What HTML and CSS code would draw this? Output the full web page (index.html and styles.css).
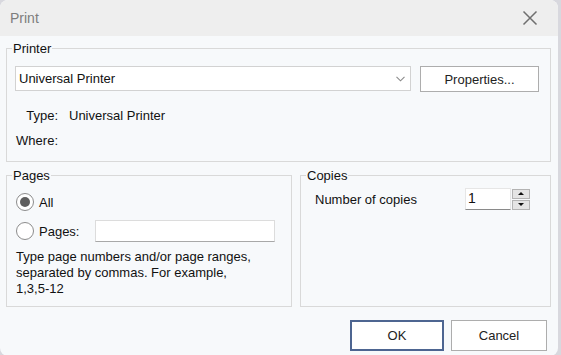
FILE: index.html
```html
<!DOCTYPE html>
<html lang="en">
<head>
    <meta charset="UTF-8">
    <meta name="viewport" content="width=device-width, initial-scale=1.0">
    <title>Print</title>
    <link rel="stylesheet" href="styles.css">
</head>
<body>

    <div class="dialog">
        <div class="titlebar">
            <span class="title">Print</span>
            <svg class="close" width="16" height="16" viewBox="0 0 16 16">
                <path d="M1.5 1.5 L14.5 14.5 M14.5 1.5 L1.5 14.5" stroke="#6f6f6f" stroke-width="1.5" fill="none"/>
            </svg>
        </div>

        <div class="content">
            <fieldset class="group">
                <legend>Printer</legend>
                <div class="group-body printer-body">
                    <div class="printer-row">
                        <div class="select">
                            <span>Universal Printer</span>
                            <svg width="9" height="6" viewBox="0 0 9 6">
                                <path d="M0.5 0.8 L4.5 4.8 L8.5 0.8" stroke="#8a8a8a" stroke-width="1.1" fill="none"/>
                            </svg>
                        </div>
                        <button class="btn btn-props">Properties...</button>
                    </div>
                    <div class="info">
                        <span class="info-label">Type:</span>
                        <span>Universal Printer</span>
                        <span class="info-label">Where:</span>
                        <span></span>
                    </div>
                </div>
            </fieldset>

            <div class="groups">
                <fieldset class="group">
                    <legend>Pages</legend>
                    <div class="group-body pages-body">
                        <div class="radio-row">
                            <span class="radio checked"></span>
                            <span>All</span>
                        </div>
                        <div class="radio-row">
                            <span class="radio"></span>
                            <span>Pages:</span>
                            <div class="text-input"></div>
                        </div>
                        <p class="hint">Type page numbers and/or page ranges, separated by commas. For example, <span class="nowrap">1,3,5-12</span></p>
                    </div>
                </fieldset>

                <fieldset class="group">
                    <legend>Copies</legend>
                    <div class="group-body copies-body">
                        <div class="copies-row">
                            <span>Number of copies</span>
                            <div class="num-input">1</div>
                            <div class="spinner">
                                <div class="spin-btn"><span class="tri-up"></span></div>
                                <div class="spin-btn"><span class="tri-down"></span></div>
                            </div>
                        </div>
                    </div>
                </fieldset>
            </div>

            <div class="actions">
                <button class="btn btn-ok">OK</button>
                <button class="btn btn-cancel">Cancel</button>
            </div>
        </div>
    </div>

</body>
</html>
```

FILE: styles.css
```css
body {
    font-family: 'Liberation Sans', Arial, sans-serif;
    font-size: 13px;
    margin: 0;
    padding: 0;
    background-color: #d8d8de;
    color: #111;
}

.dialog {
    width: 558px;
    height: 356px;
    background-color: #f7f9fb;
    border-radius: 8px;
    overflow: hidden;
}

.titlebar {
    height: 36px;
    background-color: #eeeeee;
    display: flex;
    justify-content: space-between;
    align-items: center;
    padding: 0 20px 0 10px;
}

.title {
    font-size: 14px;
    color: #7d7d7d;
}

.content {
    padding: 5px 7px 0 6px;
}

.group {
    margin: 0;
    padding: 0;
    min-width: 0;
    border: 1px solid #d9d9d9;
}

.group legend {
    margin-left: 5px;
    padding: 0 1px;
    line-height: 15px;
}

.group-body {
    line-height: 15px;
}

/* printer */
.printer-body {
    padding: 10px 11px 13px 8px;
}

.printer-row {
    display: flex;
    gap: 9px;
}

.select {
    flex: 1;
    height: 25px;
    box-sizing: border-box;
    background-color: white;
    border: 1px solid #d2d2d2;
    display: flex;
    justify-content: space-between;
    align-items: center;
    padding: 0 5px 0 3px;
}

.btn {
    font-family: inherit;
    font-size: 13px;
    color: #222;
    background-color: white;
    border: 1px solid #adadad;
    padding: 0;
    box-sizing: border-box;
}

.btn-props {
    width: 119px;
    height: 26px;
}

.info {
    display: grid;
    grid-template-columns: 43px auto;
    column-gap: 11px;
    row-gap: 10px;
    margin-top: 16px;
}

.info-label {
    text-align: right;
}

/* pages / copies */
.groups {
    display: grid;
    grid-template-columns: 286px 251px;
    gap: 8px;
    margin-top: 6px;
}

.pages-body {
    padding: 8px 16px 9px 9px;
}

.radio-row {
    display: flex;
    align-items: center;
    gap: 5px;
    height: 22px;
    margin-bottom: 7px;
}

.radio {
    width: 18px;
    height: 18px;
    box-sizing: border-box;
    border: 1px solid #8c8c8c;
    border-radius: 50%;
    background-color: white;
    display: flex;
    align-items: center;
    justify-content: center;
}

.radio.checked::after {
    content: '';
    width: 10px;
    height: 10px;
    border-radius: 50%;
    background-color: #5e5e5e;
}

.text-input {
    width: 180px;
    height: 22px;
    box-sizing: border-box;
    margin-left: auto;
    background-color: white;
    border: 1px solid #dcdcdc;
    border-bottom-color: #a8a8a8;
}

.hint {
    margin: 0;
    width: 255px;
    line-height: 16px;
}

.nowrap {
    white-space: nowrap;
}

.copies-body {
    padding: 5px 20px 0 14px;
}

.copies-row {
    display: flex;
    align-items: center;
    height: 22px;
}

.num-input {
    width: 46px;
    height: 22px;
    box-sizing: border-box;
    margin-left: auto;
    padding: 2px 0 0 2px;
    background-color: white;
    border: 1px solid #e6e6e6;
    border-bottom-color: #8a8a8a;
    font-size: 14px;
}

.spinner {
    display: flex;
    flex-direction: column;
    margin-left: 1px;
    gap: 1px;
}

.spin-btn {
    width: 18px;
    height: 10px;
    box-sizing: border-box;
    background-color: #e4e4e4;
    border: 1px solid #b3b3b3;
    display: flex;
    align-items: center;
    justify-content: center;
}

.tri-up {
    border-left: 3px solid transparent;
    border-right: 3px solid transparent;
    border-bottom: 3px solid #111;
}

.tri-down {
    border-left: 3px solid transparent;
    border-right: 3px solid transparent;
    border-top: 3px solid #111;
}

/* buttons */
.actions {
    display: flex;
    justify-content: flex-end;
    gap: 7px;
    margin-top: 13px;
    padding-right: 4px;
}

.btn-ok {
    width: 94px;
    height: 31px;
    border: 2px solid #4d6591;
}

.btn-cancel {
    width: 96px;
    height: 31px;
}
```
